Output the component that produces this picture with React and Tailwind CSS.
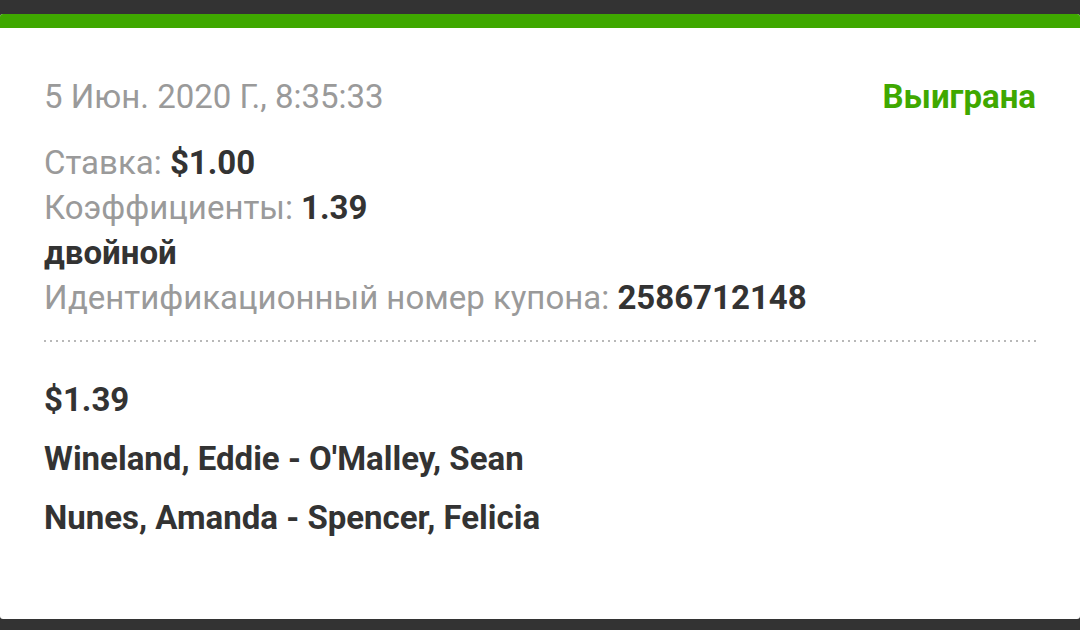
export default function App() {
  return (
    <div className="w-[1080px] h-[630px] bg-[#333333] pt-[14px] overflow-hidden" style={{ fontFamily: 'Roboto, "Noto Sans", sans-serif' }}>
      <div className="h-[605px] bg-white rounded-[3px] overflow-hidden flex flex-col">
        <div className="h-[14px] bg-[#3fa800] shrink-0" />
        <div className="px-[44px] pt-[46px] text-[33px] leading-[45px]">
          <div className="flex justify-between items-center">
            <span className="text-[#9a9a9a]">5 Июн. 2020 Г., 8:35:33</span>
            <span className="text-[#3fa800] font-bold">Выиграна</span>
          </div>
          <div className="mt-[21px]">
            <div><span className="text-[#9a9a9a]">Ставка: </span><span className="font-bold text-[#333333]">$1.00</span></div>
            <div><span className="text-[#9a9a9a]">Коэффициенты: </span><span className="font-bold text-[#333333]">1.39</span></div>
            <div className="font-bold text-[#333333]">двойной</div>
            <div><span className="text-[#9a9a9a]">Идентификационный номер купона: </span><span className="font-bold text-[#333333]">2586712148</span></div>
          </div>
          <div className="mt-[20px] h-[2px] bg-[repeating-linear-gradient(to_right,#b8b8b8_0px,#b8b8b8_2px,transparent_2px,transparent_6px)]" />
          <div className="mt-[35px] font-bold text-[#333333]">
            <div>$1.39</div>
            <div className="mt-[14px]">Wineland, Eddie - O'Malley, Sean</div>
            <div className="mt-[14px]">Nunes, Amanda - Spencer, Felicia</div>
          </div>
        </div>
      </div>
    </div>
  );
}
